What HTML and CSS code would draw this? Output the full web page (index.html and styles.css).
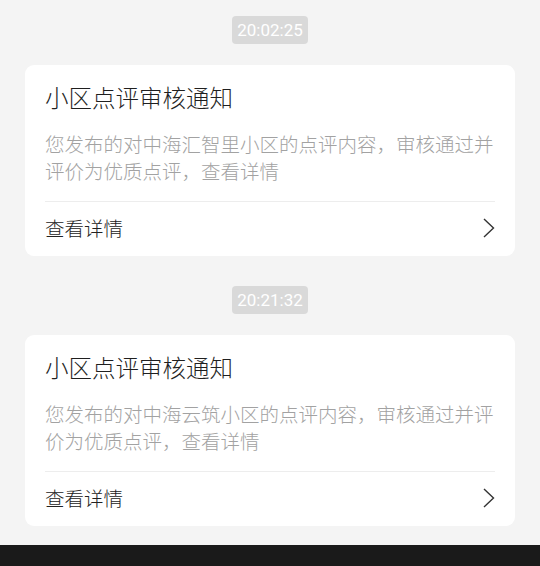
FILE: index.html
```html
<!DOCTYPE html>
<html lang="zh-CN">
<head>
<meta charset="utf-8">
<link rel="stylesheet" href="styles.css">
</head>
<body>
<div class="screen">
  <main class="feed">
    <section class="msg">
      <div class="time"><span class="pill">20:02:25</span></div>
      <article class="card">
        <h2 class="title">小区点评审核通知</h2>
        <p class="desc">您发布的对中海汇智里小区的点评内容，审核通过并评价为优质点评，查看详情</p>
        <a class="more">
          <span>查看详情</span>
          <svg class="chev" width="12" height="20" viewBox="0 0 12 20"><path d="M1 1 L10.5 10 L1 19" fill="none" stroke="#333" stroke-width="1.4"/></svg>
        </a>
      </article>
    </section>
    <section class="msg">
      <div class="time"><span class="pill">20:21:32</span></div>
      <article class="card">
        <h2 class="title">小区点评审核通知</h2>
        <p class="desc">您发布的对中海云筑小区的点评内容，审核通过并评价为优质点评，查看详情</p>
        <a class="more">
          <span>查看详情</span>
          <svg class="chev" width="12" height="20" viewBox="0 0 12 20"><path d="M1 1 L10.5 10 L1 19" fill="none" stroke="#333" stroke-width="1.4"/></svg>
        </a>
      </article>
    </section>
  </main>
  <div class="navbar"></div>
</div>
</body>
</html>
```

FILE: styles.css
```css
html, body {
  margin: 0;
  padding: 0;
}
body {
  background: #f4f4f4;
  font-family: "Noto Sans CJK SC", "Noto Sans", sans-serif;
  font-weight: 300;
}
.screen {
  height: 566px;
  display: flex;
  flex-direction: column;
}
.feed {
  flex: 1;
  padding: 16px 25px 0;
  display: flex;
  flex-direction: column;
  gap: 30px;
}
.msg {
  display: flex;
  flex-direction: column;
  gap: 21px;
}
.time {
  display: flex;
  justify-content: center;
}
.pill {
  background: #d9d9d9;
  color: #fff;
  font-family: Roboto, "Noto Sans", sans-serif;
  font-weight: 400;
  font-size: 17px;
  line-height: 28px;
  height: 28px;
  padding: 0 5px;
  border-radius: 4px;
}
.card {
  background: #fff;
  border-radius: 9px;
  padding: 16px 20px 0;
  height: 191px;
  box-sizing: border-box;
  display: flex;
  flex-direction: column;
}
.title {
  margin: 0;
  font-size: 23.5px;
  line-height: 32px;
  font-weight: 300;
  color: #1f1f1f;
}
.desc {
  margin: 17px 0 0;
  font-size: 19.5px;
  line-height: 27px;
  color: #a2a2a2;
}
.more {
  margin-top: 17px;
  padding-bottom: 3px;
  border-top: 1px solid #ededed;
  flex: 1;
  display: flex;
  align-items: center;
  justify-content: space-between;
  font-size: 19.5px;
  color: #222;
}
.chev {
  display: block;
}
.navbar {
  height: 21px;
  background: #1a1a1a;
}
```
